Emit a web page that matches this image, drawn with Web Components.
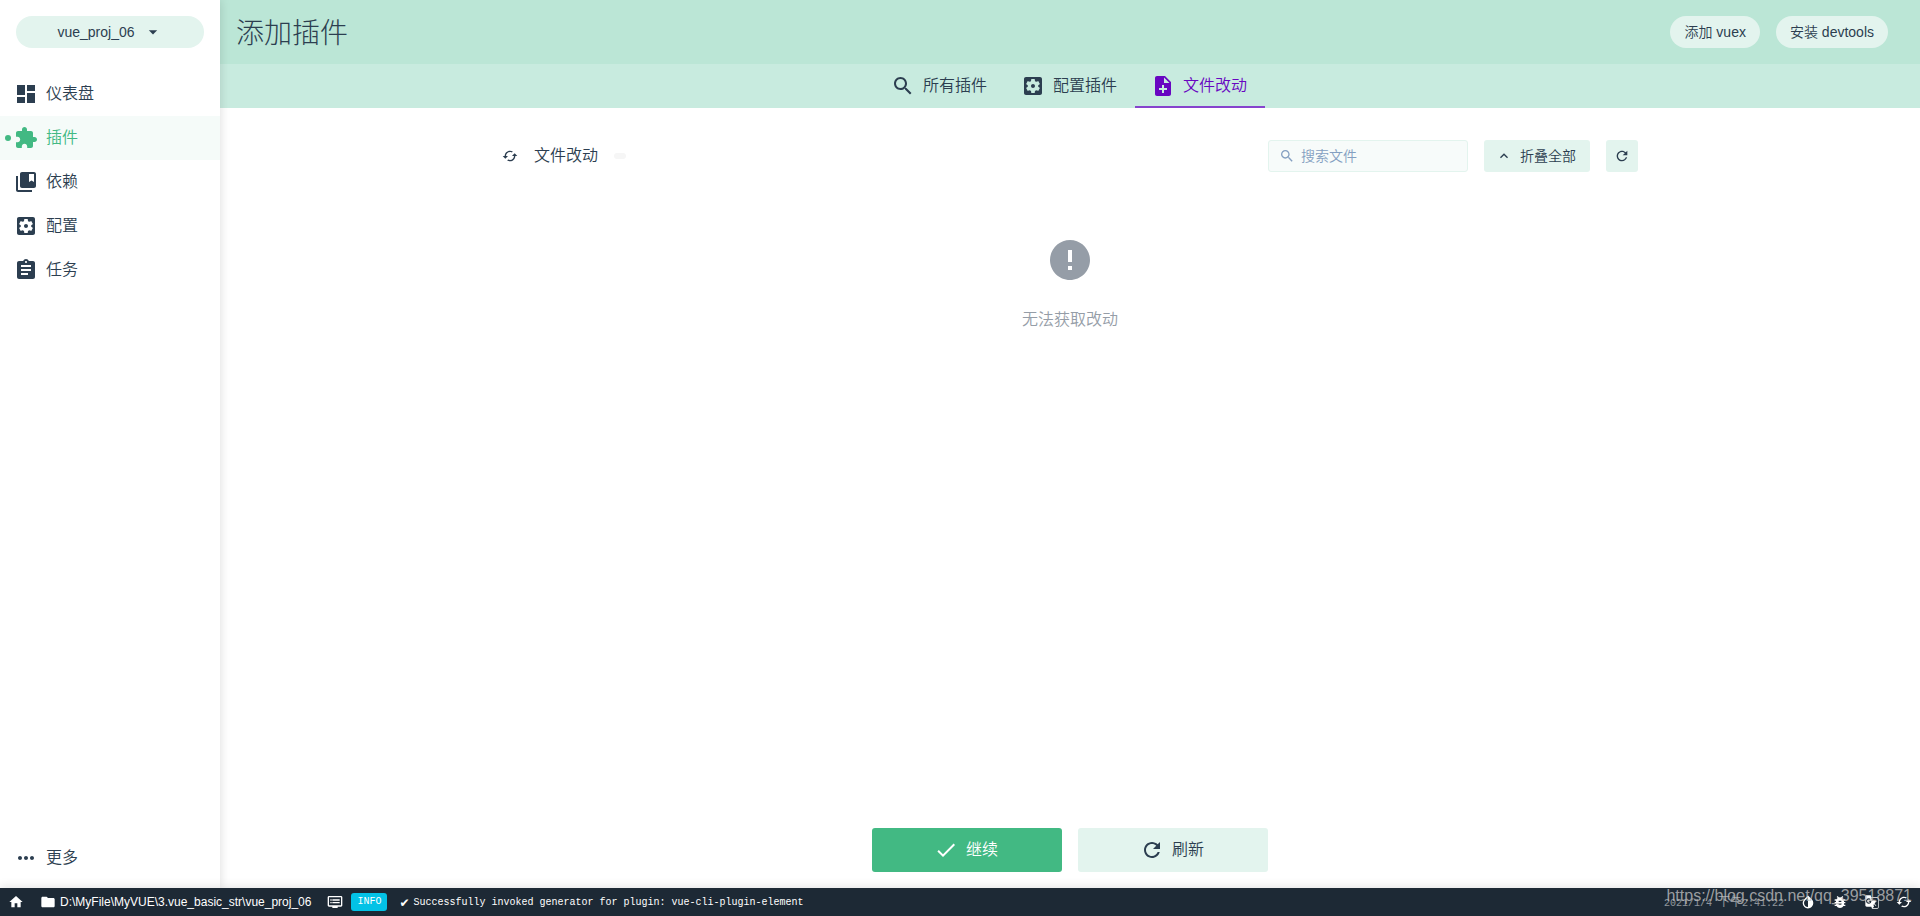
<!DOCTYPE html>
<html lang="zh-CN">
<head>
<meta charset="utf-8">
<meta name="viewport" content="width=device-width, initial-scale=1">
<title>添加插件</title>
<style>
  :root{
    --ink:#2c3e50;
    --green:#42b983;
    --green-soft:#e3f4ee;
    --green-faint:#f5fbf9;
    --violet:#6806c1;
    --mono:"Liberation Mono","Noto Sans CJK SC",monospace;
  }
  html,body{ height:100% }
  body{
    margin:0; color:var(--ink); background:#fff;
    font:350 16px/24px "Liberation Sans","Noto Sans CJK SC",sans-serif;
  }
</style>
</head>
<body>
<project-app></project-app>

<script>
const ICONS = {
  dashboard: "M3 13h8V3H3v10zm0 8h8v-6H3v6zm10 0h8V11h-8v10zm0-18v6h8V3h-8z",
  extension: "M20.5 11H19V7c0-1.1-.9-2-2-2h-4V3.5C13 2.12 11.88 1 10.5 1S8 2.12 8 3.5V5H4c-1.1 0-1.99.9-1.99 2v3.8H3.5c1.49 0 2.7 1.21 2.7 2.7s-1.21 2.7-2.7 2.7H2V20c0 1.1.9 2 2 2h3.8v-1.5c0-1.49 1.21-2.7 2.7-2.7 1.49 0 2.7 1.21 2.7 2.7V22H17c1.1 0 2-.9 2-2v-4h1.5c1.38 0 2.5-1.12 2.5-2.5S21.88 11 20.5 11z",
  bookmark: "M4 6H2v14c0 1.1.9 2 2 2h14v-2H4V6zM20 2H8c-1.1 0-2 .9-2 2v12c0 1.1.9 2 2 2h12c1.1 0 2-.9 2-2V4c0-1.1-.9-2-2-2zm0 10l-2.5-1.5L15 12V4h5v8z",
  settings: "M12 10c-1.1 0-2 .9-2 2s.9 2 2 2 2-.9 2-2-.9-2-2-2zm7-7H5c-1.11 0-2 .9-2 2v14c0 1.1.89 2 2 2h14c1.11 0 2-.9 2-2V5c0-1.1-.89-2-2-2zm-1.75 9c0 .23-.02.46-.05.68l1.48 1.16c.13.11.17.3.08.45l-1.4 2.42c-.09.15-.27.21-.43.15l-1.74-.7c-.36.28-.76.51-1.18.69l-.26 1.85c-.03.17-.18.3-.35.3h-2.8c-.17 0-.32-.13-.35-.29l-.26-1.85c-.43-.18-.82-.41-1.18-.69l-1.74.7c-.16.06-.34 0-.43-.15l-1.4-2.42c-.09-.15-.05-.34.08-.45l1.48-1.16c-.03-.23-.05-.46-.05-.69 0-.23.02-.46.05-.68l-1.48-1.16c-.13-.11-.17-.3-.08-.45l1.4-2.42c.09-.15.27-.21.43-.15l1.74.7c.36-.28.76-.51 1.18-.69l.26-1.85c.03-.17.18-.3.35-.3h2.8c.17 0 .32.13.35.29l.26 1.85c.43.18.82.41 1.18.69l1.74-.7c.16-.06.34 0 .43.15l1.4 2.42c.09.15.05.34-.08.45l-1.48 1.16c.03.23.05.46.05.69z",
  assignment: "M19 3h-4.18C14.4 1.84 13.3 1 12 1c-1.3 0-2.4.84-2.82 2H5c-1.1 0-2 .9-2 2v14c0 1.1.9 2 2 2h14c1.1 0 2-.9 2-2V5c0-1.1-.9-2-2-2zm-7 0c.55 0 1 .45 1 1s-.45 1-1 1-1-.45-1-1 .45-1 1-1zm2 14H7v-2h7v2zm3-4H7v-2h10v2zm0-4H7V7h10v2z",
  more: "M6 10c-1.1 0-2 .9-2 2s.9 2 2 2 2-.9 2-2-.9-2-2-2zm12 0c-1.1 0-2 .9-2 2s.9 2 2 2 2-.9 2-2-.9-2-2-2zm-6 0c-1.1 0-2 .9-2 2s.9 2 2 2 2-.9 2-2-.9-2-2-2z",
  search: "M15.5 14h-.79l-.28-.27C15.41 12.59 16 11.11 16 9.5 16 5.91 13.09 3 9.5 3S3 5.91 3 9.5 5.91 16 9.5 16c1.61 0 3.09-.59 4.23-1.57l.27.28v.79l5 4.99L20.49 19l-4.99-5zm-6 0C7.01 14 5 11.99 5 9.5S7.01 5 9.5 5 14 7.01 14 9.5 11.99 14 9.5 14z",
  note_add: "M14 2H6c-1.1 0-1.99.9-1.99 2L4 20c0 1.1.89 2 1.99 2H18c1.1 0 2-.9 2-2V8l-6-6zm2 14h-3v3h-2v-3H8v-2h3v-3h2v3h3v2zm-3-7V3.5L18.5 9H13z",
  cached: "M19 8l-4 4h3c0 3.31-2.69 6-6 6-1.01 0-1.97-.25-2.8-.7l-1.46 1.46C8.97 19.54 10.43 20 12 20c4.42 0 8-3.58 8-8h3l-4-4zM6 12c0-3.31 2.69-6 6-6 1.01 0 1.97.25 2.8.7l1.46-1.46C15.03 4.46 13.57 4 12 4c-4.42 0-8 3.58-8 8H1l4 4 4-4H6z",
  refresh: "M17.65 6.35C16.2 4.9 14.21 4 12 4c-4.42 0-7.99 3.58-7.99 8s3.57 8 7.99 8c3.73 0 6.84-2.55 7.73-6h-2.08c-.82 2.33-3.04 4-5.65 4-3.31 0-6-2.69-6-6s2.69-6 6-6c1.66 0 3.14.69 4.22 1.78L13 11h7V4l-2.35 2.35z",
  done: "M9 16.2L4.8 12l-1.4 1.4L9 19 21 7l-1.4-1.4L9 16.2z",
  error: "M12 2C6.48 2 2 6.48 2 12s4.48 10 10 10 10-4.48 10-10S17.52 2 12 2zm1 15h-2v-2h2v2zm0-4h-2V7h2v6z",
  drop_down: "M7 10l5 5 5-5z",
  arrow_up: "M7.41 15.41L12 10.83l4.59 4.58L18 14l-6-6-6 6z",
  home: "M10 20v-6h4v6h5v-8h3L12 3 2 12h3v8z",
  folder: "M10 4H4c-1.1 0-1.99.9-1.99 2L2 18c0 1.1.9 2 2 2h16c1.1 0 2-.9 2-2V8c0-1.1-.9-2-2-2h-8l-2-2z",
  dvr: "M21 3H3c-1.1 0-2 .9-2 2v12c0 1.1.9 2 2 2h5v2h8v-2h5c1.1 0 1.99-.9 1.99-2L23 5c0-1.1-.9-2-2-2zm0 14H3V5h18v12zm-2-9H8v2h11V8zm0 4H8v2h11v-2zM7 8H5v2h2V8zm0 4H5v2h2v-2z",
  invert: "M17.66 7.93L12 2.27 6.34 7.93c-3.12 3.12-3.12 8.19 0 11.31C7.9 20.8 9.95 21.58 12 21.58c2.05 0 4.1-.78 5.66-2.34 3.12-3.12 3.12-8.19 0-11.31zM12 19.59c-1.6 0-3.11-.62-4.24-1.76C6.62 16.69 6 15.19 6 13.59s.62-3.11 1.76-4.24L12 5.1v14.49z",
  bug: "M20 8h-2.81c-.45-.78-1.07-1.45-1.82-1.96L17 4.41 15.59 3l-2.17 2.17C12.96 5.06 12.49 5 12 5c-.49 0-.96.06-1.41.17L8.41 3 7 4.41l1.62 1.63C7.88 6.55 7.26 7.22 6.81 8H4v2h2.09c-.05.33-.09.66-.09 1v1H4v2h2v1c0 .34.04.67.09 1H4v2h2.81c1.04 1.79 2.97 3 5.19 3s4.15-1.21 5.19-3H20v-2h-2.09c.05-.33.09-.66.09-1v-1h2v-2h-2v-1c0-.34-.04-.67-.09-1H20V8zm-6 8h-4v-2h4v2zm0-4h-4v-2h4v2z",
  translate: "M20 5h-9.120L10 2H4c-1.100 0-2 .9-2 2v13c0 1.100.9 2 2 2h7l1 3h8c1.100 0 2-.9 2-2V7c0-1.100-.9-2-2-2zM7.170 14.590c-2.250 0-4.090-1.830-4.090-4.090s1.830-4.090 4.090-4.090c1.040 0 1.990.37 2.740 1.070l.07.06-1.230 1.180-.06-.05c-.29-.27-.78-.59-1.520-.59-1.310 0-2.380 1.090-2.380 2.420s1.070 2.420 2.380 2.420c1.370 0 1.960-.87 2.120-1.460H7.080V9.910h3.950l.01.07c.04.21.05.4.05.61 0 2.350-1.610 4-3.920 4zM21 20c0 .55-.45 1-1 1h-7l2-2-.81-2.770.92-.92L17.790 18l.73-.73-2.710-2.680c.9-1.030 1.600-2.250 1.920-3.510H19v-1.040h-3.640V9h-1.040v1.040h-1.960L11.180 6H20c.55 0 1 .45 1 1v13z"
};

// <ui-icon name>, sized by --icon-size
class UiIcon extends HTMLElement {
  constructor() {
    super();
    this.root = this.attachShadow({ mode: "open" });
  }

  connectedCallback() {
    this.root.innerHTML = `
      <style>
        :host{ display:block; flex:none; width:var(--icon-size, 16px); height:var(--icon-size, 16px) }
        svg{ display:block; width:100%; height:100%; fill:currentColor }
      </style>
      <svg viewBox="0 0 24 24" aria-hidden="true"><path d="${ICONS[this.getAttribute("name")]}"/></svg>
    `;
  }
}

// <ui-button icon label> — attributes: primary, round, square, big
class UiButton extends HTMLElement {
  constructor() {
    super();
    this.root = this.attachShadow({ mode: "open" });
  }

  connectedCallback() {
    const icon = this.getAttribute("icon");
    const label = this.getAttribute("label");
    this.root.innerHTML = `
      <style>
        :host{ display:block; --icon-size:16px }
        button{
          display:flex; align-items:center; justify-content:center; gap:8px;
          width:100%; height:32px; padding:0 14px; border:0; border-radius:3px;
          background:var(--green-soft); color:var(--ink);
          font:inherit; font-size:14px; line-height:20px; white-space:nowrap; cursor:pointer;
        }
        button:hover{ filter:brightness(.97) }
        :host([icon]) button{ padding-left:12px }
        :host([round]) button{ border-radius:16px }
        :host([square]) button{ width:32px; padding:0 }
        :host([big]){ --icon-size:24px }
        :host([big]) button{ height:44px; font-size:16px }
        :host([primary]) button{ background:var(--green); color:#fff }
      </style>
      <button type="button"${label ? ` aria-label="${label}"` : ""}>
        ${icon ? `<ui-icon name="${icon}"></ui-icon>` : ""}<slot></slot>
      </button>
    `;
  }
}

class NavItem extends HTMLElement {
  constructor() {
    super();
    this.root = this.attachShadow({ mode: "open" });
  }

  connectedCallback() {
    this.root.innerHTML = `
      <style>
        :host{ display:block; --icon-size:24px }
        a{
          display:flex; align-items:center; gap:8px; position:relative;
          height:44px; padding:0 14px; color:var(--ink); text-decoration:none;
        }
        a:hover{ background:var(--green-faint) }
        :host([active]) a{ color:var(--green); background:var(--green-faint) }
        :host([active]) a::before{
          content:""; position:absolute; left:5px; top:19px;
          width:6px; height:6px; border-radius:50%; background:var(--green);
        }
      </style>
      <a href="#"><ui-icon name="${this.getAttribute("icon")}"></ui-icon><slot></slot></a>
    `;
  }
}

class SideBar extends HTMLElement {
  constructor() {
    super();
    this.root = this.attachShadow({ mode: "open" });
  }

  connectedCallback() {
    this.root.innerHTML = `
      <style>
        :host{
          display:flex; flex-direction:column; box-sizing:border-box;
          padding-bottom:8px; background:#fff; z-index:2;
          box-shadow:0 0 10px rgba(0,0,0,.15);
        }
        .project{
          display:flex; align-items:center; justify-content:center; gap:8px;
          height:32px; margin:16px 16px 24px; border:0; border-radius:16px;
          background:var(--green-soft); color:var(--ink);
          font:inherit; font-size:14px; cursor:pointer; --icon-size:20px;
        }
        nav{ flex:1; display:flex; flex-direction:column }
        .more{ margin-top:auto }
      </style>
      <button class="project" type="button" aria-haspopup="menu">
        vue_proj_06 <ui-icon name="drop_down"></ui-icon>
      </button>
      <nav aria-label="项目">
        <nav-item icon="dashboard">仪表盘</nav-item>
        <nav-item icon="extension" active>插件</nav-item>
        <nav-item icon="bookmark">依赖</nav-item>
        <nav-item icon="settings">配置</nav-item>
        <nav-item icon="assignment">任务</nav-item>
        <nav-item class="more" icon="more">更多</nav-item>
      </nav>
    `;
  }
}

class PageHeader extends HTMLElement {
  constructor() {
    super();
    this.root = this.attachShadow({ mode: "open" });
  }

  connectedCallback() {
    this.root.innerHTML = `
      <style>
        :host{ display:block }
        .top{
          display:flex; align-items:center; gap:16px;
          height:64px; padding:0 32px 0 16px; background:#bbe6d6;
        }
        h1{ flex:1; margin:0; padding-top:4px; font-size:28px; line-height:40px; font-weight:300 }
        .tabs{ display:flex; justify-content:center; height:44px; background:#c8ebdf; --icon-size:24px }
        .tabs a{
          display:flex; align-items:center; gap:8px; box-sizing:border-box;
          height:44px; padding:0 18px 0 16px; color:var(--ink); text-decoration:none;
        }
        .tabs a.active{ color:var(--violet); box-shadow:inset 0 -2px #8644cd }
      </style>
      <div class="top">
        <h1><slot></slot></h1>
        <ui-button round>添加 vuex</ui-button>
        <ui-button round>安装 devtools</ui-button>
      </div>
      <nav class="tabs">
        <a href="#all"><ui-icon name="search"></ui-icon>所有插件</a>
        <a href="#config"><ui-icon name="settings"></ui-icon>配置插件</a>
        <a href="#diff" class="active" aria-current="page"><ui-icon name="note_add"></ui-icon>文件改动</a>
      </nav>
    `;
  }
}

class FileDiff extends HTMLElement {
  constructor() {
    super();
    this.root = this.attachShadow({ mode: "open" });
  }

  connectedCallback() {
    this.root.innerHTML = `
      <style>
        :host{
          display:flex; flex-direction:column; box-sizing:border-box; min-height:0;
          width:100%; max-width:1200px; margin:0 auto; padding:32px 32px 16px;
        }
        .toolbar{ display:flex; align-items:center; gap:16px }
        h2{ margin:0; font:inherit }
        .count{ width:12px; height:6px; border-radius:3px; background:#f6f6f6 }
        .search{
          display:flex; align-items:center; gap:6px; box-sizing:border-box;
          width:200px; height:32px; margin-left:auto; padding:0 10px;
          border:1px solid var(--green-soft); border-radius:3px;
          background:#f7fbfa; color:#849fc1;
        }
        input{
          flex:1; min-width:0; padding:0; border:0; outline:0; background:none;
          color:var(--ink); font:inherit; font-size:14px;
        }
        input::placeholder{ color:#849fc1; opacity:1 }
        .empty{
          flex:1; display:flex; flex-direction:column; align-items:center; gap:24px;
          padding-top:64px; color:#959da7; --icon-size:48px;
        }
        .empty p{ margin:0 }
        .actions{ display:flex; justify-content:center; gap:16px }
        .actions ui-button{ width:190px }
      </style>
      <div class="toolbar">
        <ui-icon name="cached"></ui-icon>
        <h2>文件改动</h2>
        <span class="count"></span>
        <label class="search">
          <ui-icon name="search"></ui-icon>
          <input type="text" placeholder="搜索文件" aria-label="搜索文件">
        </label>
        <ui-button icon="arrow_up">折叠全部</ui-button>
        <ui-button icon="refresh" label="刷新" square></ui-button>
      </div>
      <div class="empty">
        <ui-icon name="error"></ui-icon>
        <p>无法获取改动</p>
      </div>
      <div class="actions">
        <ui-button icon="done" big primary>继续</ui-button>
        <ui-button icon="refresh" big>刷新</ui-button>
      </div>
    `;
  }
}

class StatusBar extends HTMLElement {
  constructor() {
    super();
    this.root = this.attachShadow({ mode: "open" });
  }

  connectedCallback() {
    this.root.innerHTML = `
      <style>
        :host{
          display:flex; align-items:center; position:relative; z-index:3;
          height:28px; padding:0 8px; background:#1d2935; color:#fff;
          font-size:12px; line-height:16px; font-weight:400; white-space:nowrap;
          box-shadow:0 -2px 10px rgba(0,0,0,.1);
        }
        a, button{
          display:flex; align-items:center; gap:4px; padding:0; border:0;
          background:none; color:inherit; font:inherit; text-decoration:none; cursor:pointer;
        }
        .path{ margin-left:16px }
        .log{ margin-left:16px; gap:8px }
        .badge{
          padding:1px 6px; border-radius:3px; background:#03c2e6;
          font:10px/16px var(--mono);
        }
        .msg, time{ font:10px/16px var(--mono); padding-top:2px }
        .msg{ display:flex; align-items:center; gap:4px; margin-left:4px }
        .tick{ font:12px/16px "DejaVu Sans",sans-serif }
        .right{ display:flex; align-items:center; gap:16px; margin-left:auto }
        time{ opacity:.5 }
        .period{ font-size:12px }
        .mark{
          position:absolute; right:8px; top:-2px;
          color:rgba(190,190,190,.8); font-size:16px; line-height:20px; pointer-events:none;
        }
      </style>
      <a href="#home" aria-label="主页"><ui-icon name="home"></ui-icon></a>
      <button class="path" type="button"><ui-icon name="folder"></ui-icon>D:\\MyFile\\MyVUE\\3.vue_basic_str\\vue_proj_06</button>
      <button class="log" type="button">
        <ui-icon name="dvr"></ui-icon>
        <span class="badge">INFO</span>
        <span class="msg"><span class="tick">✔</span>Successfully invoked generator for plugin: vue-cli-plugin-element</span>
      </button>
      <div class="right">
        <time>2021/1/4 <span class="period">下午</span>2:41:22</time>
        <button type="button" aria-label="主题"><ui-icon name="invert"></ui-icon></button>
        <a href="#bug" aria-label="问题"><ui-icon name="bug"></ui-icon></a>
        <a href="#lang" aria-label="翻译"><ui-icon name="translate"></ui-icon></a>
        <button type="button" aria-label="重置"><ui-icon name="cached"></ui-icon></button>
      </div>
      <span class="mark">https://blog.csdn.net/qq_39518871</span>
    `;
  }
}

class ProjectApp extends HTMLElement {
  constructor() {
    super();
    this.root = this.attachShadow({ mode: "open" });
  }

  connectedCallback() {
    this.root.innerHTML = `
      <style>
        :host{
          display:grid; min-height:100vh;
          grid-template:"side main" 1fr "status status" auto / 220px minmax(0, 1fr);
        }
        side-bar{ grid-area:side }
        main{ grid-area:main; display:flex; flex-direction:column; min-width:0 }
        file-diff{ flex:1 }
        status-bar{ grid-area:status }
      </style>
      <side-bar></side-bar>
      <main>
        <page-header>添加插件</page-header>
        <file-diff></file-diff>
      </main>
      <status-bar></status-bar>
    `;
  }
}

customElements.define("ui-icon", UiIcon);
customElements.define("ui-button", UiButton);
customElements.define("nav-item", NavItem);
customElements.define("side-bar", SideBar);
customElements.define("page-header", PageHeader);
customElements.define("file-diff", FileDiff);
customElements.define("status-bar", StatusBar);
customElements.define("project-app", ProjectApp);
</script>
</body>
</html>
